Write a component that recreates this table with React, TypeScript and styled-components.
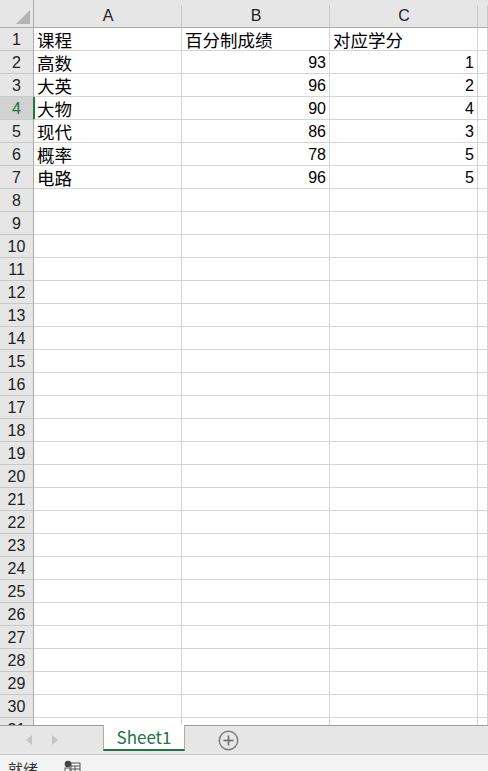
import React from "react";
import styled, { createGlobalStyle, css } from "styled-components";

const Global = createGlobalStyle`
  html, body { margin: 0; padding: 0; background: #ffffff; overflow: hidden; }
  body { width: 488px; height: 771px; }
  * { box-sizing: border-box; }
`;

const LATIN = `"Liberation Sans", "Noto Sans CJK SC", Arial, sans-serif`;
const CJK = `"Noto Sans CJK SC", "Liberation Sans", sans-serif`;

const Page = styled.div`
  display: flex;
  flex-direction: column;
  width: 488px;
  height: 771px;
  overflow: hidden;
`;

const Sheet = styled.div`
  height: 725px;
  overflow: hidden;
  display: grid;
  grid-template-columns: 34px 148px 148px 148px 1fr;
  grid-auto-rows: 23px;
  grid-template-rows: 28px;
  flex-shrink: 0;
`;

const Corner = styled.div`
  background: #e6e6e6;
  border-right: 1px solid #ababab;
  border-bottom: 1px solid #ababab;
  display: flex;
  align-items: flex-end;
  justify-content: flex-end;
  padding: 0 3px 3px 0;
`;

const ColHead = styled.div`
  background-color: #e6e6e6;
  background-image: linear-gradient(#c8c8c8, #c8c8c8);
  background-repeat: no-repeat;
  background-size: 1px 22px;
  background-position: right bottom;
  border-bottom: 1px solid #ababab;
  display: flex;
  align-items: center;
  justify-content: center;
  padding-top: 4px;
  font-family: ${LATIN};
  font-size: 16px;
  color: #222;
`;

const RowHead = styled.div<{ $active?: boolean }>`
  background: ${(p) => (p.$active ? "#d2d2d2" : "#e6e6e6")};
  border-right: 1px solid ${(p) => (p.$active ? "#217346" : "#ababab")};
  border-bottom: 1px solid #c8c8c8;
  display: flex;
  align-items: center;
  justify-content: center;
  font-family: ${LATIN};
  font-size: 16px;
  color: ${(p) => (p.$active ? "#217346" : "#222")};
  padding-top: 1px;
`;

const Cell = styled.div<{ $align?: "left" | "right"; $cjk?: boolean; $activeLeft?: boolean }>`
  border-right: 1px solid #d4d4d4;
  border-bottom: 1px solid #d4d4d4;
  display: flex;
  align-items: center;
  justify-content: ${(p) => (p.$align === "right" ? "flex-end" : "flex-start")};
  padding: 1px 3px 0 3px;
  white-space: nowrap;
  overflow: hidden;
  color: #000;
  font-family: ${(p) => (p.$cjk ? CJK : LATIN)};
  font-size: ${(p) => (p.$cjk ? "17.5px" : "16px")};
  ${(p) =>
    p.$activeLeft &&
    css`
      box-shadow: inset 1px 0 0 #217346;
    `}
`;

const TabBar = styled.div`
  height: 30px;
  flex-shrink: 0;
  background: #e6e6e6;
  border-top: 1px solid #9f9f9f;
  border-bottom: 1px solid #c6c6c6;
  display: flex;
  align-items: stretch;
`;

const NavArea = styled.div`
  width: 103px;
  display: flex;
  align-items: center;
  padding-left: 25px;
  gap: 18px;
`;

const Tab = styled.div`
  width: 82px;
  margin-top: -1px;
  height: 26px;
  background: #ffffff;
  border-left: 1px solid #ababab;
  border-right: 1px solid #ababab;
  border-bottom: 2px solid #217346;
  display: flex;
  align-items: center;
  justify-content: center;
  font-family: ${CJK};
  font-size: 17px;
  color: #217346;
  padding-bottom: 1px;
`;

const AddArea = styled.div`
  display: flex;
  align-items: center;
  padding-left: 33px;
`;

const StatusBar = styled.div`
  flex: 1;
  background: #f3f3f3;
  display: flex;
  align-items: flex-start;
  padding: 3px 0 0 8px;
  gap: 26px;
  font-family: ${CJK};
  font-size: 15px;
  color: #333;
`;

const StatusIcon = styled.div`
  padding-top: 1px;
`;

type Row = [string, string, string];
const data: Row[] = [
  ["课程", "百分制成绩", "对应学分"],
  ["高数", "93", "1"],
  ["大英", "96", "2"],
  ["大物", "90", "4"],
  ["现代", "86", "3"],
  ["概率", "78", "5"],
  ["电路", "96", "5"],
];

const ROWS = 31;

export default function App() {
  const rows = [];
  for (let r = 1; r <= ROWS; r++) {
    const d = data[r - 1];
    const active = r === 4;
    rows.push(
      <React.Fragment key={r}>
        <RowHead $active={active}>{r}</RowHead>
        <Cell $cjk $activeLeft={active}>{d ? d[0] : ""}</Cell>
        <Cell $cjk={r === 1} $align={r === 1 ? "left" : "right"}>{d ? d[1] : ""}</Cell>
        <Cell $cjk={r === 1} $align={r === 1 ? "left" : "right"}>{d ? d[2] : ""}</Cell>
        <Cell />
      </React.Fragment>
    );
  }
  return (
    <>
      <Global />
      <Page>
        <Sheet>
          <Corner>
            <svg width="14" height="14" viewBox="0 0 14 14">
              <polygon points="14,0 14,14 0,14" fill="#b4b4b4" />
            </svg>
          </Corner>
          <ColHead>A</ColHead>
          <ColHead>B</ColHead>
          <ColHead>C</ColHead>
          <ColHead />
          {rows}
        </Sheet>
        <TabBar>
          <NavArea>
            <svg width="8" height="12" viewBox="0 0 8 12">
              <polygon points="7,1 1,6 7,11" fill="#c4c4c4" />
            </svg>
            <svg width="8" height="12" viewBox="0 0 8 12">
              <polygon points="1,1 7,6 1,11" fill="#c4c4c4" />
            </svg>
          </NavArea>
          <Tab>Sheet1</Tab>
          <AddArea>
            <svg width="21" height="21" viewBox="0 0 21 21">
              <circle cx="10.5" cy="10.5" r="9.2" fill="none" stroke="#7b7b7b" strokeWidth="1.4" />
              <line x1="5.5" y1="10.5" x2="15.5" y2="10.5" stroke="#6b6b6b" strokeWidth="1.6" />
              <line x1="10.5" y1="5.5" x2="10.5" y2="15.5" stroke="#6b6b6b" strokeWidth="1.6" />
            </svg>
          </AddArea>
        </TabBar>
        <StatusBar>
          <span>就绪</span>
          <StatusIcon>
            <svg width="17" height="16" viewBox="0 0 17 16">
              <circle cx="4" cy="4" r="3.3" fill="#444" />
              <rect x="7" y="3" width="9" height="12" fill="none" stroke="#555" strokeWidth="1" />
              <line x1="7" y1="6" x2="16" y2="6" stroke="#555" strokeWidth="1" />
              <line x1="7" y1="9" x2="16" y2="9" stroke="#555" strokeWidth="1" />
              <line x1="7" y1="12" x2="16" y2="12" stroke="#555" strokeWidth="1" />
              <line x1="11" y1="6" x2="11" y2="15" stroke="#555" strokeWidth="1" />
              <rect x="1" y="8" width="5" height="7" fill="none" stroke="#555" strokeWidth="1" />
            </svg>
          </StatusIcon>
        </StatusBar>
      </Page>
    </>
  );
}
